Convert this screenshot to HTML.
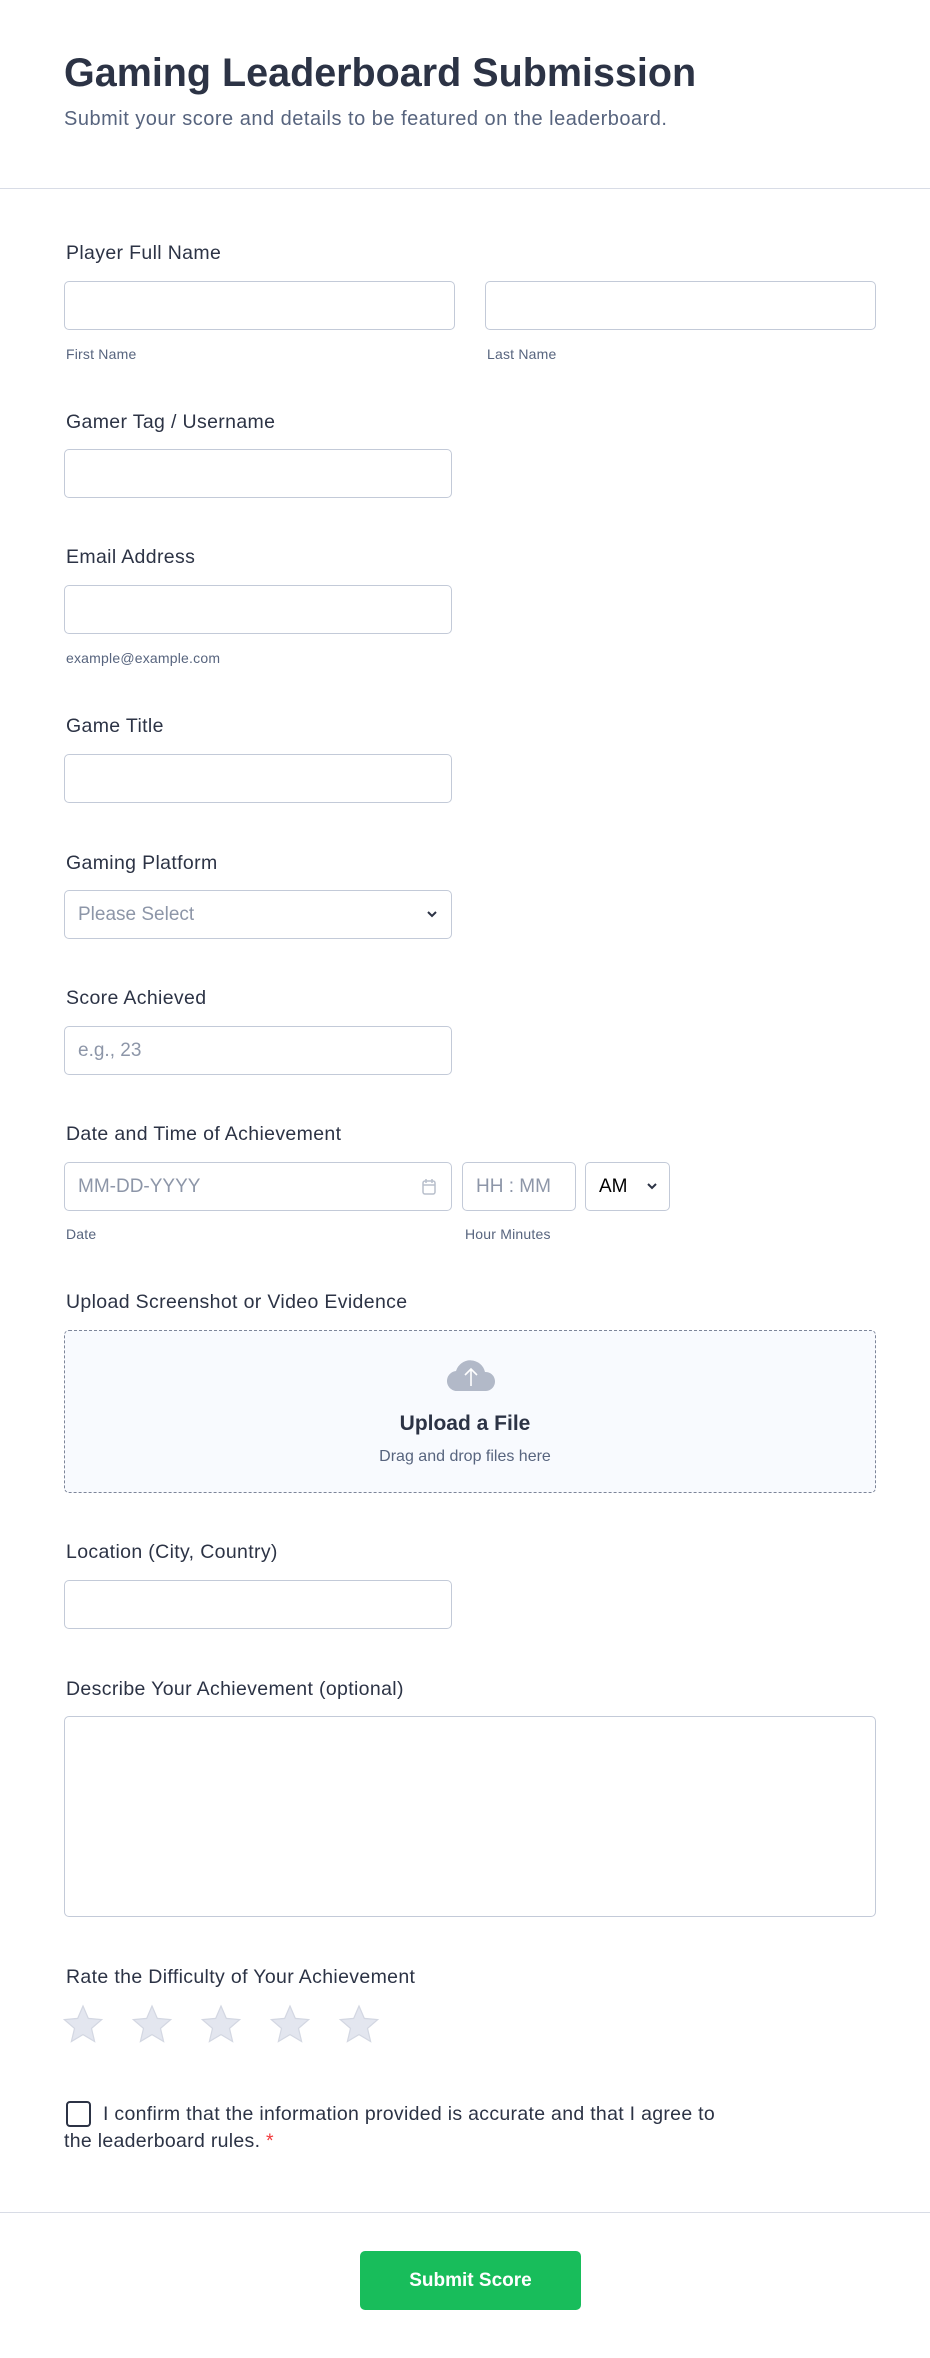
<!DOCTYPE html>
<html><head><meta charset="utf-8"><style>
*{box-sizing:border-box;margin:0;padding:0}
body{width:930px;height:2358px;background:#fff;font-family:"Liberation Sans",sans-serif;color:#2c3345;position:relative;overflow:hidden}
.a{position:absolute}
h1{position:absolute;left:64px;top:51px;font-size:39.5px;font-weight:bold;color:#2c3345}
.sub{left:64px;top:108px;font-size:20px;letter-spacing:0.5px;color:#57647e}
.hr{left:0;width:930px;height:1px;background:#d8dce6}
.lb{left:66px;font-size:19.5px;letter-spacing:0.35px;color:#2c3345;margin-top:3px}
.in{border:1.5px solid #c3cad8;border-radius:5px;background:#fff;height:49px}
.sl{font-size:14px;letter-spacing:0.2px;color:#57647e}
.ph{font-size:19px;color:#8d96a8}
</style></head><body>
<h1>Gaming Leaderboard Submission</h1>
<div class="a sub">Submit your score and details to be featured on the leaderboard.</div>
<div class="a hr" style="top:188px"></div>

<div class="a lb" style="top:239px">Player Full Name</div>
<div class="a in" style="left:64px;top:281px;width:391px"></div>
<div class="a in" style="left:485px;top:281px;width:391px"></div>
<div class="a sl" style="left:66px;top:346px">First Name</div>
<div class="a sl" style="left:487px;top:346px">Last Name</div>

<div class="a lb" style="top:408px">Gamer Tag / Username</div>
<div class="a in" style="left:64px;top:449px;width:388px"></div>

<div class="a lb" style="top:543px">Email Address</div>
<div class="a in" style="left:64px;top:585px;width:388px"></div>
<div class="a sl" style="left:66px;top:650px">example@example.com</div>

<div class="a lb" style="top:712px">Game Title</div>
<div class="a in" style="left:64px;top:754px;width:388px"></div>

<div class="a lb" style="top:849px">Gaming Platform</div>
<div class="a in" style="left:64px;top:890px;width:388px"><span class="a ph" style="left:13px;top:13px">Please Select</span>
<svg class="a" style="right:12px;top:18px" width="14" height="10" viewBox="0 0 14 10"><path d="M3 3l4 4 4-4" fill="none" stroke="#2c3345" stroke-width="2"/></svg></div>

<div class="a lb" style="top:984px">Score Achieved</div>
<div class="a in" style="left:64px;top:1026px;width:388px"><span class="a ph" style="left:13px;top:13px">e.g., 23</span></div>

<div class="a lb" style="top:1120px">Date and Time of Achievement</div>
<div class="a in" style="left:64px;top:1162px;width:388px"><span class="a ph" style="left:13px;top:13px">MM-DD-YYYY</span>
<svg class="a" style="right:14px;top:15px" width="16" height="18" viewBox="0 0 16 18"><rect x="2" y="3" width="12" height="13" rx="2" fill="none" stroke="#b8bfcc" stroke-width="1.5"/><path d="M2 7h12M5 1v4M11 1v4" stroke="#b8bfcc" stroke-width="1.5"/></svg></div>
<div class="a in" style="left:462px;top:1162px;width:114px"><span class="a ph" style="left:13px;top:13px">HH : MM</span></div>
<div class="a in" style="left:585px;top:1162px;width:85px"><span class="a" style="left:13px;top:13px;font-size:19px;color:#000">AM</span>
<svg class="a" style="right:10px;top:18px" width="14" height="10" viewBox="0 0 14 10"><path d="M3 3l4 4 4-4" fill="none" stroke="#2c3345" stroke-width="2"/></svg></div>
<div class="a sl" style="left:66px;top:1226px">Date</div>
<div class="a sl" style="left:465px;top:1226px">Hour Minutes</div>

<div class="a lb" style="top:1288px">Upload Screenshot or Video Evidence</div>
<div class="a" style="left:64px;top:1330px;width:812px;height:163px;border:1.5px dashed #7d8599;border-radius:5px;background:#f8fafe"></div>
<svg class="a" style="left:446px;top:1358px" width="50" height="34" viewBox="0 0 50 34"><path d="M12 33a10 10 0 0 1-2-20 15 15 0 0 1 29 1 9.5 9.5 0 0 1 1 19z" fill="#b2b9c8"/><path d="M25 28V11M19 17l6-6 6 6" fill="none" stroke="#fff" stroke-width="1.6"/></svg>
<div class="a" style="left:0;width:930px;text-align:center;top:1412px;font-size:21px;font-weight:bold">Upload a File</div>
<div class="a" style="left:0;width:930px;text-align:center;top:1448px;font-size:16px;color:#57647e">Drag and drop files here</div>

<div class="a lb" style="top:1538px">Location (City, Country)</div>
<div class="a in" style="left:64px;top:1580px;width:388px"></div>

<div class="a lb" style="top:1675px">Describe Your Achievement (optional)</div>
<div class="a in" style="left:64px;top:1716px;width:812px;height:201px"></div>

<div class="a lb" style="top:1963px">Rate the Difficulty of Your Achievement</div>
<svg class="a" style="left:63px;top:2004px" width="320" height="42" viewBox="0 0 320 42">
<defs><path id="s" d="M20 2l5.3 12.4 13.4 1.2-10.2 8.8 3.1 13.1L20 30.6 8.4 37.5l3.1-13.1L1.3 15.6l13.4-1.2z" fill="#e3e6ef" stroke="#d3d7e2" stroke-width="1.2"/></defs>
<use href="#s"/><use href="#s" x="69"/><use href="#s" x="138"/><use href="#s" x="207"/><use href="#s" x="276"/></svg>

<div class="a" style="left:66px;top:2101px;width:25px;height:26px;border:2px solid #2c3345;border-radius:4px"></div>
<div class="a" style="left:64px;top:2101px;width:675px;font-size:19.5px;letter-spacing:0.3px;line-height:27px;text-indent:39px;color:#2c3345">I confirm that the information provided is accurate and that I agree to the leaderboard rules. <span style="color:#f23a3c">*</span></div>

<div class="a hr" style="top:2212px"></div>
<div class="a" style="left:360px;top:2251px;width:221px;height:59px;background:#18bd5b;border-radius:5px;color:#fff;font-size:19px;font-weight:bold;text-align:center;line-height:59px">Submit Score</div>
</body></html>
